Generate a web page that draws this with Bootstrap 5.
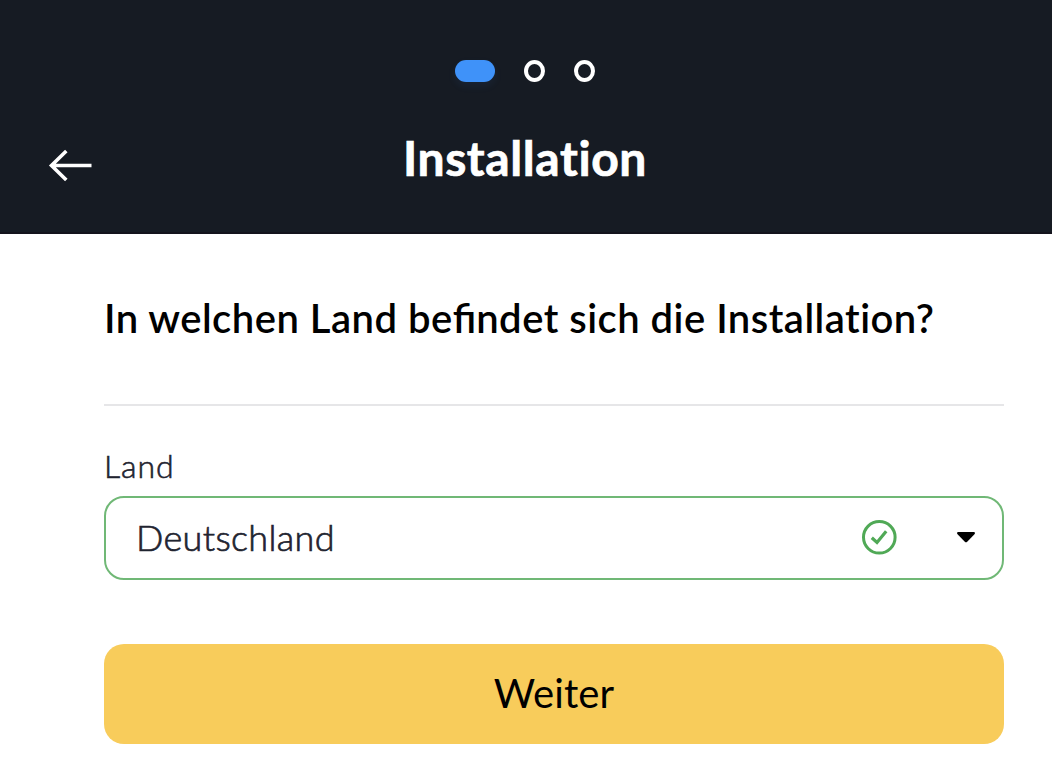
<!DOCTYPE html>
<html lang="de">

<head>
    <meta charset="UTF-8">
    <meta name="viewport" content="width=device-width, initial-scale=1.0">
    <title>Installation</title>
    <link href="https://cdn.jsdelivr.net/npm/bootstrap@5.3.0/dist/css/bootstrap.min.css" rel="stylesheet">
    <style>
        body {
            font-family: Lato, 'Noto Sans', sans-serif;
            background-color: #fff;
            color: #1f2430;
        }

        .setup-header {
            height: 234px;
            padding-top: 60px;
            background-color: #161b23;
            border-bottom: 2px solid #14131c;
        }

        .steps {
            gap: 29px;
            padding-right: 2px;
        }

        .step {
            width: 21px;
            height: 22px;
            border: 4px solid #fff;
            border-radius: 50%;
        }

        .step.active {
            width: 40px;
            background-color: #3f92f9;
            border: 0;
            border-radius: 11px;
            box-shadow: 0 4px 8px rgba(63, 146, 249, .08);
        }

        .title-bar {
            display: grid;
            grid-template-columns: 104px 1fr 106px;
            margin-top: 46px;
        }

        .back-btn {
            margin: 19px 0 0 47px;
            line-height: 0;
        }

        h1 {
            font-size: 48px;
            font-weight: 700;
            line-height: 60px;
            letter-spacing: .6px;
            -webkit-text-stroke: .7px;
        }

        .setup-form {
            padding: 59px 48px 0 104px;
        }

        h2 {
            height: 111px;
            font-size: 40px;
            font-weight: 600;
            line-height: 50px;
            letter-spacing: .48px;
            color: #000;
            white-space: nowrap;
        }

        .ligature {
            letter-spacing: 0;
        }

        .divider {
            height: 2px;
            background-color: #e6e6e8;
        }

        .country-label {
            margin-top: 40px;
            font-size: 32px;
            font-weight: 300;
            line-height: 40px;
            letter-spacing: .9px;
            -webkit-text-stroke: .6px;
        }

        .country-select {
            height: 84px;
            margin-top: 10px;
            padding: 0 26px 2px 30px;
            border: 2px solid #70b876;
            border-radius: 20px;
            color: #1f2430;
            font-size: 36px;
            font-weight: 300;
        }

        .country-name {
            padding-bottom: 1px;
            letter-spacing: .35px;
            -webkit-text-stroke: .7px;
        }

        .select-icons {
            gap: 59px;
        }

        .next-btn {
            height: 100px;
            margin-top: 64px;
            padding: 0 0 2px;
            border: 0;
            border-radius: 20px;
            background-color: #f8cc5b;
            color: #000;
            font-size: 40px;
            letter-spacing: .1px;
        }

        .next-btn:hover {
            background-color: #f2c24a;
        }
    </style>
</head>

<body>
    <header class="setup-header text-white">
        <div class="steps d-flex justify-content-center">
            <span class="step active"></span>
            <span class="step"></span>
            <span class="step"></span>
        </div>
        <div class="title-bar">
            <a class="back-btn text-white" href="#" aria-label="Zurück">
                <svg width="46" height="36" viewBox="0 0 46 36" fill="none" stroke="currentColor" stroke-width="3.6">
                    <path d="M44.5 18.5H5M19.3 4 4.5 18.5 19.3 33" />
                </svg>
            </a>
            <h1 class="text-center mb-0">Installation</h1>
        </div>
    </header>

    <main class="setup-form">
        <h2 class="mb-0">In welchen Land be<span class="ligature">fi</span>ndet sich die Installation?</h2>
        <div class="divider"></div>
        <div class="country-label" id="countryLabel">Land</div>
        <button type="button" class="country-select btn w-100 d-flex align-items-center justify-content-between"
            aria-labelledby="countryLabel">
            <span class="country-name">Deutschland</span>
            <span class="select-icons d-flex align-items-center">
                <svg width="36" height="36" viewBox="0 0 36 36" fill="none" stroke="#50a956" stroke-width="3">
                    <circle cx="18.3" cy="18.3" r="15.8" />
                    <path d="M10.8 18.7 16 23.5 25.2 12.2" stroke-width="3.2" />
                </svg>
                <svg width="20" height="12" viewBox="0 0 20 12">
                    <path d="M2 1h16q1.8 .5 .7 2L11.2 10.8q-1.2 1-2.4 0L1.3 3Q.2 1.5 2 1z" fill="#000" />
                </svg>
            </span>
        </button>
        <button type="button" class="next-btn btn w-100">Weiter</button>
    </main>

    <script src="https://cdn.jsdelivr.net/npm/bootstrap@5.3.0/dist/js/bootstrap.bundle.min.js"></script>
</body>

</html>
